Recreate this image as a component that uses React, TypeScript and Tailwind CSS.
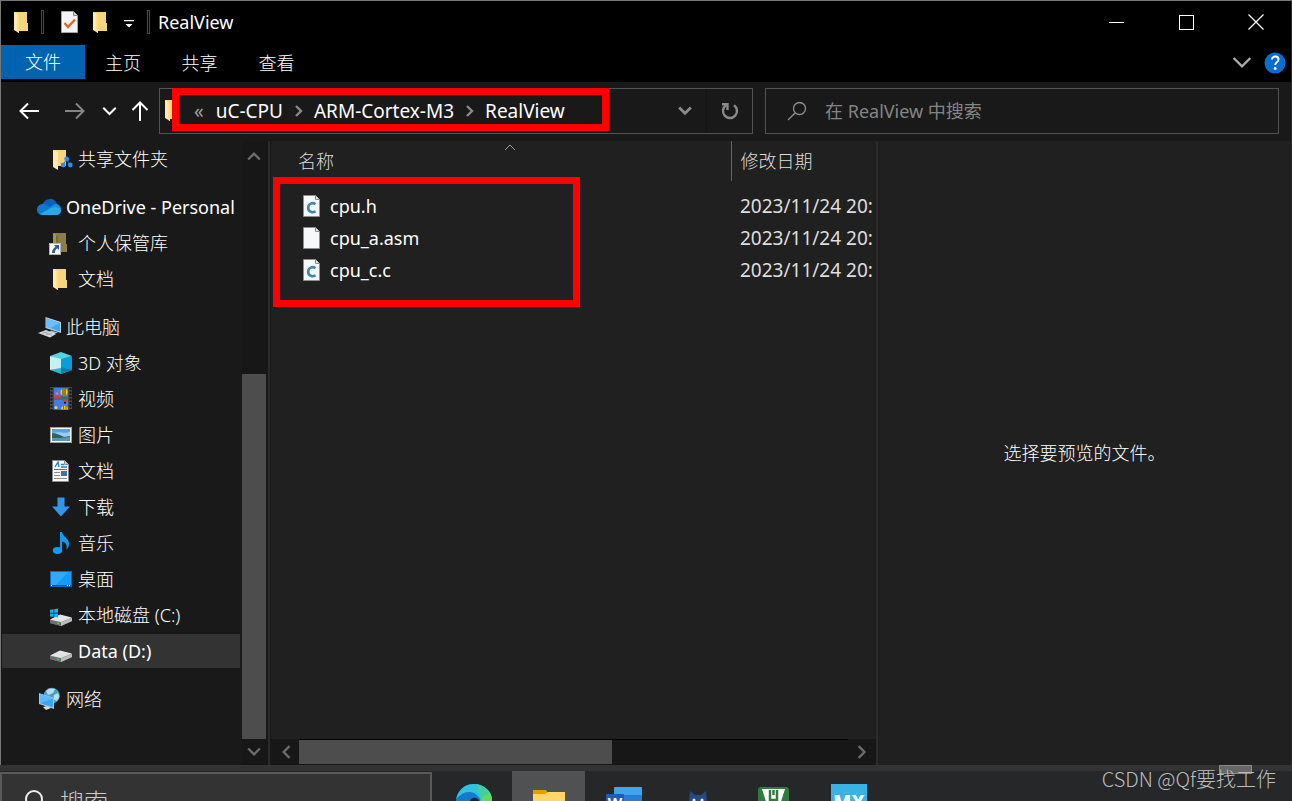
import { ReactNode } from "react";

function FolderShape({ dull = false }: { dull?: boolean }) {
  return (
    <>
      <path d="M4 2h13v11h1v8H6z" fill={dull ? "#8d7b48" : "#f6d67c"} />
      <path d="M4 2l5 3v18l-5-3z" fill={dull ? "#a3935f" : "#ffe9ae"} />
      <path d="M9 5l0 18-2-1.200V4z" fill={dull ? "#7a6a3c" : "#ffdf8e"} />
    </>
  );
}

function FolderIcon() {
  return (
    <svg viewBox="4 1 15 23" className="h-[23px] w-[15px] shrink-0">
      <FolderShape />
    </svg>
  );
}

function DriveShape() {
  return (
    <>
      <path d="M1 17l10-5 12 3v3l-11 5-11-3z" fill="#8f8f8f" />
      <path d="M1 16.500l10-5 12 3-11 4.500z" fill="#e4e4e6" />
      <path d="M1 17l11 2.500V23L1 20z" fill="#6d6d6d" />
      <path d="M12 19.500l11-4.500v3l-11 5z" fill="#bdbdbf" />
      <rect x="8" y="19.500" width="2" height="1.500" fill="#35d04a" />
    </>
  );
}

const icons: Record<string, ReactNode> = {
  shared: (
    <>
      <g transform="translate(0 1)">
        <path d="M4 2h13v16H6z" fill="#f6d67c" />
        <path d="M4 2l5 2v18l-5-3z" fill="#ffe9ae" />
      </g>
      <path d="M14 18.500l3.500-6.500 4 6.500" stroke="#2d6fb3" fill="none" />
      <circle cx="17.700" cy="12" r="2.400" fill="#2b8ff5" />
      <circle cx="14.200" cy="18" r="2.400" fill="#2b8ff5" />
      <circle cx="21.300" cy="18" r="2.400" fill="#2b8ff5" />
    </>
  ),
  onedrive: (
    <>
      <path d="M5 13c0-5 3-9 8-9 4 0 6 2 7 5l-6 4z" fill="#0a5fb8" />
      <path d="M5.500 20C2 20 0 17.500 0 14.500S2.500 9 6 9c2 0 3 .6 5 2l5 3-8 6z" fill="#0f78d4" />
      <path d="M11 14l5-4c1-.7 2-1 3-1 3 0 5 2.500 5 5.500z" fill="#1490df" />
      <path d="M3 19l11-6c3-1.500 10-1 10 2.700 0 2.500-2 4.300-4.500 4.300H6c-1 0-2-.3-3-1z" fill="#29a8ea" />
    </>
  ),
  vault: (
    <>
      <FolderShape dull />
      <rect x=".5" y="12.500" width="11" height="11" fill="#fff" stroke="#b5b5b5" />
      <path d="M5 14h5v5l-1.800-1.700C6.500 18.500 6 20 6 22H3c0-2.500 1-4.500 3.500-6.300z" fill="#2b5c9e" />
    </>
  ),
  pc: (
    <>
      <path d="M8.500 2L24 7v11L8.500 13z" fill="#b9cfdf" />
      <path d="M9.500 3.500L23 8v8.500L9.500 12z" fill="#3da9f2" />
      <path d="M9.500 3.500L23 8 13 13l-3.500-1z" fill="#69c0fa" />
      <path d="M14 15.500l7 2-4 1.500-5-1.500z" fill="#b7bcc2" />
      <path d="M1 18l8-3 10 4-6 3.500z" fill="#d9dde2" />
      <path d="M5 18.700l7-2.200M9 20l6-2.200M5 16.500l10 4" stroke="#8a9097" strokeWidth=".6" />
    </>
  ),
  cube: (
    <>
      <path d="M12 1l11 4-11 4L1 5z" fill="#55d3e4" />
      <path d="M12 8l11-3v14l-11-2z" fill="#0c9dd9" />
      <path d="M1 19l11-3 11 3-11 4z" fill="#2bb4cf" />
      <path d="M12 16v7l11-4z" fill="#0b7fae" />
      <path d="M1 5l11 3v9L1 19z" fill="#c5f2f1" />
    </>
  ),
  video: (
    <>
      <rect x="1" y="0" width="22" height="23" fill="#4a4a4a" />
      <path d="M2.500 1v22M21.500 1v22" stroke="#141414" strokeWidth="2" strokeDasharray="2 1.500" />
      <rect x="5" y="1" width="14" height="10.500" fill="#3f7fe0" />
      <rect x="5" y="12.500" width="14" height="10" fill="#3f7fe0" />
      <path d="M5 9l3-1 3 1 2 .5v2H5z" fill="#d13c4c" />
      <path d="M12 9.500h7v2h-7z" fill="#2c7d3a" />
      <circle cx="15" cy="5" r="3.600" fill="#f0c52c" />
      <path d="M14 1.500v7M16 1.500v7" stroke="#44301c" />
      <circle cx="8" cy="6.500" r="1.500" fill="#e46bb0" />
      <path d="M13 12.500h6l-2 2.500h-2z" fill="#d9363a" />
      <path d="M15 15h2v1.500h-2z" fill="#141414" />
      <path d="M12 22.500c0-5 7-5 7 0z" fill="#f0c52c" />
      <path d="M14.500 19v3.500M17 19v3.500" stroke="#b22d2d" strokeWidth=".8" />
      <circle cx="7" cy="20.500" r="1.500" fill="#ead24e" />
    </>
  ),
  pictures: (
    <>
      <rect x="1.500" y="4.500" width="21" height="15" fill="#fff" stroke="#9f9f9f" />
      <rect x="3" y="6" width="18" height="12" fill="#9bcdf2" />
      <path d="M3 6h18v3c-6 2-10-1-18 1z" fill="#5aa2e6" />
      <path d="M3 10c4 0 8 2 12 4l6-1v5H3z" fill="#2d6b55" />
      <path d="M3 15c6 0 12 0 18-1v4H3z" fill="#5c93bb" />
    </>
  ),
  documents: (
    <>
      <path d="M3.500 1.500h12l4 4v17h-16z" fill="#fafafa" stroke="#8d8d8d" />
      <path d="M15.500 1.500v4h4" fill="#ccc" stroke="#8d8d8d" />
      <path d="M6 8l3-5 1 5M12 5.500h3M12 8h6" stroke="#1b82cf" strokeWidth="1.300" fill="none" />
      <path d="M5 10.500h13" stroke="#1b82cf" />
      <path d="M5 13.500h6M5 16.500h6M5 19.500h13" stroke="#8e8e8e" />
      <rect x="12" y="12" width="6" height="5" fill="#3a76a6" />
    </>
  ),
  downloads: <path d="M8.500 2.500h7v9h5.500L12 21.500l-9-10h5.500z" fill="#3295ea" />,
  music: (
    <>
      <ellipse cx="8.500" cy="19.500" rx="4.700" ry="3.400" fill="#0e9bf2" />
      <path d="M11 1h2c1 5 7 6 7 12 0 2-1 4-2.500 6 1-5-.5-7.500-4.500-8.500v9h-2z" fill="#0e9bf2" />
    </>
  ),
  desktop: (
    <>
      <rect x="1.500" y="4.500" width="21" height="15" fill="#139bf7" stroke="#0a6cb4" />
      <path d="M2 5h17L7 18H2z" fill="#31a9fb" />
      <path d="M2 18.500h20" stroke="#0a5c9c" />
      <path d="M2 18.500h1M18 18.500h1M20 18.500h1" stroke="#fff" />
    </>
  ),
  diskC: (
    <>
      <DriveShape />
      <path d="M1 6.800l3.500-.5v3.400H1zM5.200 6.200L9 5.600v4.100H5.200zM1 10.400h3.500v3.400L1 13.400zM5.200 10.400H9v4l-3.800-.5z" fill="#11b4f4" />
    </>
  ),
  disk: <DriveShape />,
  network: (
    <>
      <circle cx="14.700" cy="8.700" r="8" fill="#4e9fc7" />
      <path d="M9 4c3-3 6-3 9-2l-2 4-5 2zM17 8l4-2 1.500 4-3 4-3-2z" fill="#b7dcec" />
      <path d="M2 6l15 5v11L2 17z" fill="#9ccbe8" />
      <path d="M3 7.200L16 11.500v9L3 16.300z" fill="#39a7f3" />
      <path d="M3 16.300v-9L16 11.500z" fill="#5cbcfa" />
      <path d="M6 20l4-1 4 2-5 2z" fill="#d5dade" />
    </>
  ),
};

const treeGroups = [
  [{ label: "共享文件夹", icon: "shared", child: true }],
  [
    { label: "OneDrive - Personal", icon: "onedrive", latin: true },
    { label: "个人保管库", icon: "vault", child: true },
    { label: "文档", icon: "folder", child: true },
  ],
  [
    { label: "此电脑", icon: "pc" },
    { label: "3D 对象", icon: "cube", child: true },
    { label: "视频", icon: "video", child: true },
    { label: "图片", icon: "pictures", child: true },
    { label: "文档", icon: "documents", child: true },
    { label: "下载", icon: "downloads", child: true },
    { label: "音乐", icon: "music", child: true },
    { label: "桌面", icon: "desktop", child: true },
    { label: "本地磁盘 (C:)", icon: "diskC", child: true },
    { label: "Data (D:)", icon: "disk", child: true, selected: true, latin: true },
  ],
  [{ label: "网络", icon: "network" }],
] as { label: string; icon: string; child?: boolean; selected?: boolean; latin?: boolean }[][];

const files = [
  { name: "cpu.h", source: true, date: "2023/11/24 20:" },
  { name: "cpu_a.asm", source: false, date: "2023/11/24 20:" },
  { name: "cpu_c.c", source: true, date: "2023/11/24 20:" },
];

const chevrons = {
  up: "M1 9l5-5 5 5",
  down: "M1 3l5 5 5-5",
  left: "M9 1L4 6l5 5",
  right: "M4 1l5 5-5 5",
};

function Chevron({
  dir,
  className,
  width = 2,
}: {
  dir: keyof typeof chevrons;
  className: string;
  width?: number;
}) {
  return (
    <svg viewBox="0 0 12 12" className={className} fill="none" stroke="currentColor" strokeWidth={width}>
      <path d={chevrons[dir]} />
    </svg>
  );
}

function FileIcon({ source }: { source: boolean }) {
  return (
    <svg viewBox="0 0 18 22" className="h-[22px] w-[18px] shrink-0">
      <path d="M.5.5h12l4 4v17H.5z" fill="#f7f8f9" stroke="#8c8f8f" />
      <path d="M12.500.5v4h4" fill="#e2e2e2" stroke="#8c8f8f" />
      {source && (
        <path d="M12.500 9.200C9.500 7 5.200 8.600 5.200 12.700s4.300 5.700 7.300 3.500" fill="none" stroke="#4088ab" strokeWidth="2.600" />
      )}
    </svg>
  );
}

function TitleBar() {
  return (
    <header className="flex h-11 items-center bg-black pb-0.5 pl-[13px]">
      <FolderIcon />
      <span className="ml-3 h-6 w-[3px] border border-[#4a4a4a]" />
      <button aria-label="属性" className="ml-[17px]">
        <svg viewBox="0 0 18 22" className="h-[22px] w-[18px]">
          <path d="M.5.5h12l4 4v17H.5z" fill="#f5f5f5" stroke="#a5a5a5" />
          <path d="M12.500.5v4h4" fill="#ccc" stroke="#8c8c8c" />
          <path d="M3.500 12l3.500 4 7-7.500" fill="none" stroke="#e8601c" strokeWidth="2.200" />
        </svg>
      </button>
      <button aria-label="新建文件夹" className="ml-[14px]">
        <FolderIcon />
      </button>
      <button aria-label="自定义快速访问工具栏" className="ml-4 pt-1">
        <svg viewBox="0 0 10 10" className="h-[10px] w-[10px]" fill="#fff">
          <path d="M0 1h10v1.200H0zM1.500 5h7L5 8.500z" />
        </svg>
      </button>
      <span className="ml-[13px] h-6 w-[3px] border border-[#4a4a4a]" />
      <h1 className="ml-2 flex-1 font-normal">RealView</h1>
      <button aria-label="最小化" className="flex h-full w-[70px] items-center justify-center">
        <span className="h-px w-[15px] bg-white" />
      </button>
      <button aria-label="最大化" className="flex h-full w-[70px] items-center justify-center">
        <span className="h-[15px] w-[15px] border border-white" />
      </button>
      <button aria-label="关闭" className="flex h-full w-[70px] items-center justify-center">
        <svg viewBox="0 0 16 16" className="h-4 w-4" stroke="#fff" strokeWidth="1.300">
          <path d="M.5.5l15 15M15.500.5l-15 15" />
        </svg>
      </button>
    </header>
  );
}

function Ribbon() {
  return (
    <nav className="flex h-[37px] bg-black pb-px">
      <button className="mb-0.5 w-[84px] bg-[#0063b1]">文件</button>
      <button className="w-[76px]">主页</button>
      <button className="w-[77px]">共享</button>
      <button className="w-[77px]">查看</button>
      <button aria-label="展开功能区" className="mr-3 ml-auto text-[#ababab]">
        <Chevron dir="down" className="h-5 w-5" width={1.4} />
      </button>
      <button aria-label="帮助" className="mr-[5px] flex items-center">
        <svg viewBox="0 0 22 22" className="h-[22px] w-[22px]">
          <circle cx="11" cy="11" r="10.500" fill="#0a6ed1" />
          <path d="M8 7.500C8 3.500 14.500 3.600 14.500 7.500c0 2.500-3.300 2.800-3.300 5.500" fill="none" stroke="#fff" strokeWidth="1.900" />
          <circle cx="11.200" cy="16.500" r="1.400" fill="#fff" />
        </svg>
      </button>
    </nav>
  );
}

function Arrow({ d, className }: { d: string; className: string }) {
  return (
    <svg viewBox="0 0 20 20" className={className} fill="none" stroke="currentColor" strokeWidth="2">
      <path d={d} />
    </svg>
  );
}

function AddressRow() {
  return (
    <div className="flex h-[59px] items-center bg-[#191919] pr-3 pb-px pl-[18px]">
      <button aria-label="后退">
        <Arrow d="M20 10H1.500M9 2.500L1.500 10 9 17.500" className="h-5 w-5" />
      </button>
      <button aria-label="前进" className="ml-[26px] text-[#858585]">
        <Arrow d="M0 10h18.500M11 2.500l7.500 7.500-7.500 7.500" className="h-5 w-5" />
      </button>
      <button aria-label="最近浏览的位置" className="ml-[17px]">
        <Chevron dir="down" className="h-[15px] w-[15px]" width={1.6} />
      </button>
      <button aria-label="上移" className="ml-[13px]">
        <Arrow d="M10 20V1.500M2.500 9L10 1.500 17.500 9" className="h-5 w-5" />
      </button>
      <div className="relative ml-[9px] flex h-[46px] min-w-0 flex-1 items-center border border-[#535353] pb-px pl-[5px] text-[19px] font-normal">
        <FolderIcon />
        <span className="ml-[14px] text-[#a0a0a0]">«</span>
        <button className="ml-3">uC-CPU</button>
        <Chevron dir="right" className="ml-[9px] h-3 w-3 text-[#8a8a8a]" width={2.4} />
        <button className="ml-[10px]">ARM-Cortex-M3</button>
        <Chevron dir="right" className="ml-[9px] h-3 w-3 text-[#8a8a8a]" width={2.4} />
        <button className="ml-[10px]">RealView</button>
        <button aria-label="以前的位置" className="ml-auto flex h-full w-11 items-center justify-center border-r border-[#141414] text-[#8a8a8a]">
          <Chevron dir="down" className="h-[14px] w-[14px]" width={2.4} />
        </button>
        <button aria-label="刷新" className="flex h-full w-[45px] items-center justify-center text-[#8a8a8a]">
          <svg viewBox="0 0 18 18" className="h-[18px] w-[18px]" fill="none" stroke="currentColor" strokeWidth="2.400">
            <path d="M13 3.200A7 7 0 1 1 5 3.200" />
            <path d="M1 2.200h5.500V8" />
          </svg>
        </button>
        {/* highlight around the path */}
        <div className="pointer-events-none absolute -top-px left-3 h-[43px] w-[437px] border-7 border-[#ff0000]" />
      </div>
      <label className="ml-3 flex h-[46px] w-[42%] max-w-[514px] items-center border border-[#535353] pl-[21px]">
        <svg viewBox="0 0 20 20" className="h-5 w-5 shrink-0" fill="none" stroke="#8e8e8e" strokeWidth="1.300">
          <circle cx="12.500" cy="7.500" r="6" />
          <path d="M8.300 11.800L1 19" />
        </svg>
        <input
          aria-label="搜索文件夹"
          placeholder="在 RealView 中搜索"
          className="ml-[18px] min-w-0 flex-1 bg-transparent font-normal outline-none placeholder:text-[#858585]"
        />
      </label>
    </div>
  );
}

function Sidebar() {
  return (
    <aside className="flex bg-[#191919]">
      <div className="flex min-w-0 flex-1 flex-col gap-3">
        {treeGroups.map((group, i) => (
          <ul key={i}>
            {group.map((item) => (
              <li key={item.icon} className="h-9 py-px pr-0.5 pl-px">
                <button
                  className={`flex h-full w-full items-center gap-[5px] whitespace-nowrap ${
                    item.child ? "pl-[47px]" : "pl-[35px]"
                  } ${item.selected ? "bg-[#333333]" : ""} ${item.latin ? "font-normal" : ""}`}
                >
                  <svg viewBox="0 0 24 24" className="h-6 w-6 shrink-0">
                    {icons[item.icon] || <FolderShape />}
                  </svg>
                  {item.label}
                </button>
              </li>
            ))}
          </ul>
        ))}
      </div>
      <div className="flex w-[26px] flex-col bg-[#171717] pr-0.5 text-[#6c6c6c]">
        <button aria-label="向上滚动" className="flex h-[30px] items-center justify-center">
          <Chevron dir="up" className="h-[14px] w-[14px]" width={2} />
        </button>
        <div className="flex-1" />
        <div className="h-[365px] bg-[#4d4d4d]" />
        <button aria-label="向下滚动" className="flex h-[26px] items-center justify-center">
          <Chevron dir="down" className="h-[14px] w-[14px]" width={2} />
        </button>
      </div>
      <div className="w-[3px] border-r border-[#191919] bg-[#2b2b2b]" />
    </aside>
  );
}

function FileList() {
  return (
    <main className="relative flex min-w-0 flex-col">
      <div className="min-h-0 flex-1 overflow-hidden">
        <table className="w-full table-fixed text-left">
          <thead>
            <tr className="h-10 text-[#dedede]">
              <th className="relative w-[460px] border-r border-[#636363] pl-[27px] font-light">
                名称
                <Chevron dir="up" className="absolute top-0 left-[233px] h-3 w-3 text-[#9a9a9a]" width={1} />
              </th>
              <th className="pl-[9px] font-light">修改日期</th>
            </tr>
          </thead>
          <tbody className="font-normal before:block before:h-[9px] before:content-['']">
            {files.map((file) => (
              <tr key={file.name} className="h-8">
                <td className="pl-8">
                  <div className="flex items-center gap-[9px]">
                    <FileIcon source={file.source} />
                    {file.name}
                  </div>
                </td>
                <td className="pl-[9px] text-[19px] whitespace-nowrap text-[#dedede]">{file.date}</td>
              </tr>
            ))}
          </tbody>
        </table>
      </div>
      <div className="flex h-[26px] bg-[#171717] pr-0.5 pl-0.5 text-[#6c6c6c]">
        <button aria-label="向左滚动" className="flex w-[26px] items-center justify-center">
          <Chevron dir="left" className="h-[14px] w-[14px]" width={2} />
        </button>
        <div className="flex-1 border-t border-black">
          <div className="h-6 w-[57%] bg-[#4d4d4d]" />
        </div>
        <button aria-label="向右滚动" className="flex w-[26px] items-center justify-center">
          <Chevron dir="right" className="h-[14px] w-[14px]" width={2} />
        </button>
      </div>
      {/* highlight around the files */}
      <div className="pointer-events-none absolute top-9 left-0.5 h-[130px] w-[307px] border-7 border-[#ff0000]" />
    </main>
  );
}

const apps = [
  {
    name: "Edge",
    art: (
      <>
        <circle cx="18" cy="18" r="18" fill="#0f83d8" />
        <path d="M0 15C3 4 10 0 18 0c10 0 18 7 18 16 0 5-4 7-8 7-3 0-5-1-5-3 3-5 0-8-5-8-7 0-13-3-18 3z" fill="#2fc1dd" />
        <path d="M24 1.200C31 4 36 9 36 16c0 5-4 7-8 7-3 0-5-1-5-3 4-5 4-12 1-18.800z" fill="#5edc62" />
        <path d="M20 .2C27 1 31 5 33 9l-9 6c0-6-2-10-4-14.800z" fill="#3fcfa4" />
        <path d="M0 18C2 11 8 8 13 8c6 0 10 4 10 8-2-3-9-3-10 4-1 5 2 12 8 15C8 38 0 28 0 18z" fill="#1279cb" />
        <path d="M13 20c0-4 3-7 7-6 3 1 4 4 3 6 0 3 8 4 12 2-4 8-20 10-22-2z" fill="#172231" />
      </>
    ),
  },
  {
    name: "文件资源管理器",
    active: true,
    art: (
      <>
        <path d="M2 6h13l2 3v5H2z" fill="#e2a000" />
        <path d="M2 10h12l3-2h17v23H2z" fill="#ffd768" />
      </>
    ),
  },
  {
    name: "Word",
    art: (
      <>
        <rect x="8" y="3" width="28" height="10" rx="1" fill="#41a5ee" />
        <rect x="8" y="11" width="28" height="8" fill="#2b7cd3" />
        <rect x="8" y="19" width="28" height="14" fill="#185abd" />
        <rect x="0" y="10" width="18" height="18" rx="1" fill="#1b5cbe" />
        <text x="9" y="24" fontSize="15" fontWeight="700" textAnchor="middle" fill="#fff">
          W
        </text>
      </>
    ),
  },
  {
    name: "Clash",
    art: (
      <>
        <path d="M9 7l5 4h6l5-4 1 12v14H8V19z" fill="#224a86" />
        <circle cx="13" cy="16" r="1.500" fill="#e8eef5" />
        <circle cx="21" cy="16" r="1.500" fill="#e8eef5" />
      </>
    ),
  },
  {
    name: "uVision",
    art: (
      <>
        <rect x="2" y="3" width="31" height="31" rx="3" fill="#2f7a3c" />
        <path d="M6 5h23l-8 25h-7z" fill="#fff" />
        <path d="M14 6v10h7V6M17.500 6v5" fill="none" stroke="#2f7a3c" strokeWidth="2.500" />
      </>
    ),
  },
  {
    name: "CubeMX",
    art: (
      <>
        <rect width="36" height="36" fill="#39b2e4" />
        <text x="18" y="25" fontSize="19" fontWeight="800" textAnchor="middle" fill="#fff">
          MX
        </text>
      </>
    ),
  },
];

function Taskbar() {
  return (
    <footer className="flex h-[30px] items-start overflow-hidden bg-[#262729]">
      <label className="mt-px flex h-[59px] w-[432px] items-center border-2 border-[#5a5a5a] bg-[#333333] pl-[22px]">
        <svg viewBox="0 0 24 24" className="h-6 w-6 shrink-0" fill="none" stroke="#ececec" strokeWidth="2">
          <circle cx="10" cy="9" r="8" />
          <path d="M4.500 15L0 21" />
        </svg>
        <input
          aria-label="搜索"
          placeholder="搜索"
          className="ml-3 min-w-0 flex-1 bg-transparent text-2xl outline-none placeholder:text-[#cccccc]"
        />
      </label>
      <div className="ml-1 flex">
        {apps.map((app) => (
          <button
            key={app.name}
            aria-label={app.name}
            className={`mx-px flex h-[62px] w-[73px] items-center justify-center ${app.active ? "bg-[#505153]" : ""}`}
          >
            <svg viewBox="0 0 36 36" className="h-9 w-9">
              {app.art}
            </svg>
          </button>
        ))}
      </div>
    </footer>
  );
}

export default function App() {
  return (
    <div className="relative flex h-screen flex-col overflow-hidden bg-[#202020] font-['Noto_Sans','Noto_Sans_CJK_SC',sans-serif] text-[18px] leading-6 font-light text-white">
      <div className="flex min-h-0 flex-1 flex-col border-t border-r border-l border-[#777777] border-r-[#2c2c2c]">
        <TitleBar />
        <Ribbon />
        <AddressRow />
        <div className="grid min-h-0 flex-1 grid-cols-[270px_minmax(0,1fr)_415px]">
          <Sidebar />
          <FileList />
          <section className="flex items-center justify-center border-l-2 border-[#2c2c2c]">选择要预览的文件。</section>
        </div>
      </div>
      <div className="h-1.5 bg-[#333333]" />
      <Taskbar />
      <div className="absolute right-10 bottom-[27px] h-[9px] w-[33px] border border-[#8a8a8a] bg-[#666666]" />
      <p className="absolute right-4 bottom-2 font-['Noto_Sans_CJK_SC',sans-serif] text-xl text-[#bdbdbd]">
        CSDN @Qf要找工作
      </p>
    </div>
  );
}
